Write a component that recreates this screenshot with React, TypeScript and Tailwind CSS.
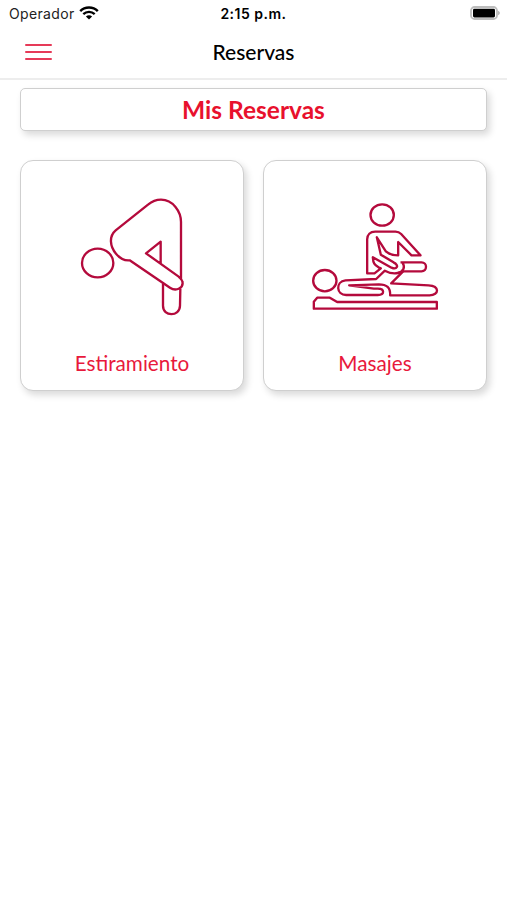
import type { ReactNode } from "react";

function StatusBar() {
  return (
    <div className="grid h-[26px] grid-cols-3 items-center pl-[9px] pr-[7px] font-['Inter',sans-serif] text-black">
      <div className="flex items-center gap-1">
        <span className="text-[14px] tracking-[0.35px] text-[#222]">Operador</span>
        <svg width="20" height="14" viewBox="0 0 20 14" fill="none" stroke="currentColor">
          <path d="M1.2 5.2C6 0.3 14 0.3 18.8 5.2" strokeWidth="2.4" />
          <path d="M4.3 8.2C7.5 5.1 12.5 5.1 15.7 8.2" strokeWidth="2.3" />
          <path d="M10 13.6L6.9 10.5C8.6 8.9 11.4 8.9 13.1 10.5Z" fill="currentColor" stroke="none" />
        </svg>
      </div>
      <span className="-ml-[2px] text-center text-[14px] font-semibold tracking-[0.5px]">2:15 p.m.</span>
      <svg className="justify-self-end" width="30" height="14" viewBox="0 0 30 14">
        <rect x="1" y="1" width="26" height="12" rx="3.6" fill="white" stroke="#bdbdbd" strokeWidth="1.8" />
        <rect x="3" y="2.8" width="22" height="8.6" rx="1.4" fill="black" />
        <path d="M28.2 4.8C30.2 5.6 30.2 8.4 28.2 9.2Z" fill="#aaa" />
      </svg>
    </div>
  );
}

function Header() {
  return (
    <header className="grid h-[54px] grid-cols-[1fr_auto_1fr] items-center border-b-2 border-[#ededed] px-[25px]">
      <button aria-label="Menu" className="flex w-[27px] flex-col gap-[5px]">
        <span className="h-[2px] rounded-full bg-[#e63a58]" />
        <span className="h-[2px] rounded-full bg-[#e63a58]" />
        <span className="h-[2px] rounded-full bg-[#e63a58]" />
      </button>
      <h1 className="pb-[2px] text-[21px] leading-none font-medium text-black">Reservas</h1>
    </header>
  );
}

function StretchIcon() {
  return (
    <svg
      className="h-[140px] w-[148px]"
      viewBox="-36 0 444 420"
      fill="none"
      stroke="#b40a3c"
      strokeWidth="7"
      strokeLinejoin="round"
    >
      <ellipse cx="83" cy="219" rx="47" ry="43" />
      <path d="M333 270V96C333 65 309 29 273 29C257 29 246 34 234 44L137 121C116 139 120 170 138 191C149 204 160 213 179 211L300 293C319 306 342 293 337 274C336 268 332 264 326 260L228 190L272 155V220" />
      <path d="M279 281V347C279 381 329 381 330 347L331 297" />
    </svg>
  );
}

function MassageIcon() {
  return (
    <svg
      className="h-[140px] w-[148px]"
      viewBox="-11.5 -15 444 420"
      fill="none"
      stroke="#b40a3c"
      strokeWidth="7"
      strokeLinejoin="round"
    >
      <ellipse cx="232" cy="60" rx="35" ry="32" />
      <ellipse cx="60" cy="257" rx="35" ry="32" />
      <path d="M27 341V320L37 308H75L97 321H396V341Z" />
      <path d="M187 235V133C187 119 196 110 211 110H272C279 110 284 112 289 117L347 181H320L280 141V181C264 181 253 178 243 169L216 127L228 179L266 202C285 211 276 225 260 218L204 187C205 205 209 210 221 217L228 220L209 235Z" />
      <path d="M287 202H350C368 202 368 229 350 229H295L259 265L371 271C405 273 404 300 374 301H256C257 278 246 268 222 268L133 271L207 281H219C240 281 240 300 219 300H124C94 300 91 260 122 256L214 252L240 227C253 234 265 237 279 234C296 230 302 217 293 203" />
      <path d="M279 234L295 229" />
    </svg>
  );
}

function ServiceCard({ label, children }: { label: string; children: ReactNode }) {
  return (
    <button className="flex h-[231px] flex-col items-center rounded-[13px] border border-[#cfcfcf] bg-white pt-[29px] shadow-[3px_4px_7px_rgba(0,0,0,0.15)]">
      {children}
      <span className="mt-5 text-[20.7px] leading-[26px] text-[#e8193c]">{label}</span>
    </button>
  );
}

export default function App() {
  return (
    <div className="min-h-screen w-full bg-white font-['Lato',sans-serif]">
      <StatusBar />
      <Header />
      <main className="px-5 pt-2">
        <div className="flex h-[43px] items-center justify-center rounded-[5px] border border-[#cfcfcf] bg-white pt-[2px] shadow-[3px_4px_7px_rgba(0,0,0,0.15)]">
          <h2 className="text-[24.5px] leading-none font-bold text-[#e8112d]">Mis Reservas</h2>
        </div>
        <div className="mt-[29px] grid grid-cols-2 gap-[19px]">
          <ServiceCard label="Estiramiento">
            <StretchIcon />
          </ServiceCard>
          <ServiceCard label="Masajes">
            <MassageIcon />
          </ServiceCard>
        </div>
      </main>
    </div>
  );
}
